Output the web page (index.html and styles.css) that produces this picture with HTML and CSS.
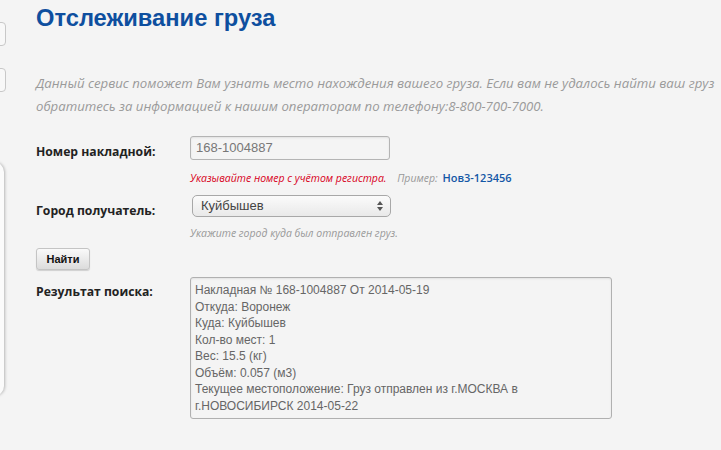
FILE: index.html
```html
<!DOCTYPE html>
<html lang="ru">
<head>
  <meta charset="UTF-8">
  <title>Отслеживание груза</title>
  <link rel="stylesheet" href="styles.css">
</head>
<body>

<div class="side">
  <div class="side-tab"></div>
  <div class="side-tab"></div>
  <div class="side-panel"></div>
</div>

<div class="content">
  <h1>Отслеживание груза</h1>

  <p class="intro">Данный сервис поможет Вам узнать место нахождения вашего груза. Если вам не удалось найти ваш груз обратитесь за информацией к нашим операторам по телефону:8-800-700-7000.</p>

  <div class="row">
    <div class="label">Номер накладной:</div>
    <div class="field">
      <div class="input">168-1004887</div>
      <div class="hint"><span class="warn">Указывайте номер с учётом регистра.</span> <span class="example">Пример: <b>Нов3-123456</b></span></div>
    </div>
  </div>

  <div class="row">
    <div class="label">Город получатель:</div>
    <div class="field">
      <div class="select">Куйбышев<span class="arrows"><i class="up"></i><i class="down"></i></span></div>
      <div class="hint hint-city">Укажите город куда был отправлен груз.</div>
    </div>
  </div>

  <button class="btn">Найти</button>

  <div class="row result-row">
    <div class="label">Результат поиска:</div>
    <div class="result">
      Накладная № 168-1004887 От 2014-05-19<br>
      Откуда: Воронеж<br>
      Куда: Куйбышев<br>
      Кол-во мест: 1<br>
      Вес: 15.5 (кг)<br>
      Объём: 0.057 (м3)<br>
      Текущее местоположение: Груз отправлен из г.МОСКВА в г.НОВОСИБИРСК 2014-05-22
    </div>
  </div>
</div>

</body>
</html>
```

FILE: styles.css
```css
body { margin: 0; background: #f4f4f4; font-family: "Liberation Sans", Arial, sans-serif; color: #222; overflow: hidden; }

.side { position: absolute; left: 0; top: 0; width: 6px; }
.side-tab { position: absolute; left: -20px; width: 24px; height: 22px; background: #f8f8f8; border: 1px solid #c8c8c8; border-radius: 4px; }
.side-tab:nth-child(1) { top: 22px; }
.side-tab:nth-child(2) { top: 68px; }
.side-panel { position: absolute; left: -30px; top: 162px; width: 34px; height: 234px; background: #fbfbfb; border-radius: 0 10px 10px 0; box-shadow: 1px 0 3px rgba(0,0,0,0.25); }

.content { padding: 4px 0 0 36px; width: 690px; }

h1 { margin: 0; font-size: 23.7px; font-weight: bold; color: #0e4f9f; line-height: 28px; }

.intro { margin: 40px 0 18px; font-family: "Open Sans", sans-serif; font-style: italic; font-size: 13.2px; line-height: 23px; color: #9a9a9a; }

.row { display: flex; }
.label { width: 154px; font-family: "Open Sans", sans-serif; font-weight: bold; font-size: 12.2px; color: #222; padding-top: 7px; }

.field { width: 400px; }
.input { width: 188px; height: 22px; line-height: 22px; padding: 0 5px; border: 1px solid #b4b4b4; border-radius: 3px; background: #f4f4f4; color: #777; font-size: 13px; box-shadow: inset 0 1px 2px rgba(0,0,0,0.08); }

.hint { font-family: "Open Sans", sans-serif; font-style: italic; font-size: 10.5px; color: #999; margin: 10px 0 10px; height: 15px; }
.hint-city { margin: 9px 0 7px; }
.example { margin-left: 8px; }
.hint b { font-style: normal; color: #1357a6; font-weight: 600; font-size: 11px; margin-left: 2px; }
.warn { color: #d8001a; }

.select { position: relative; width: 183px; margin-left: 2px; height: 20px; line-height: 20px; padding: 0 6px 0 8px; border: 1px solid #a8a8a8; border-radius: 5px; background: linear-gradient(#fbfbfb, #e9e9e9); color: #444; font-size: 13px; }
.arrows { position: absolute; right: 6px; top: 5px; width: 7px; }
.arrows i { display: block; width: 0; height: 0; border-left: 3px solid transparent; border-right: 3px solid transparent; }
.arrows .up { border-bottom: 4px solid #555; margin-bottom: 2px; }
.arrows .down { border-top: 4px solid #555; }

.btn { display: block; margin: 0 0 7px; width: 54px; height: 22px; padding: 0; border: 1px solid #c4c4c4; border-radius: 3px; background: linear-gradient(#fafafa, #dcdcdc); box-shadow: 0 1px 1px rgba(0,0,0,0.15); font-family: "Liberation Sans", Arial, sans-serif; font-weight: bold; font-size: 11px; color: #111; }

.result-row .label { padding-top: 6px; }
.result { width: 412px; height: 132px; padding: 4px 4px; border: 1px solid #b0b0b0; border-radius: 3px; background: #f4f4f4; font-size: 12px; line-height: 16.5px; color: #666; box-shadow: inset 0 1px 2px rgba(0,0,0,0.08); }
```
